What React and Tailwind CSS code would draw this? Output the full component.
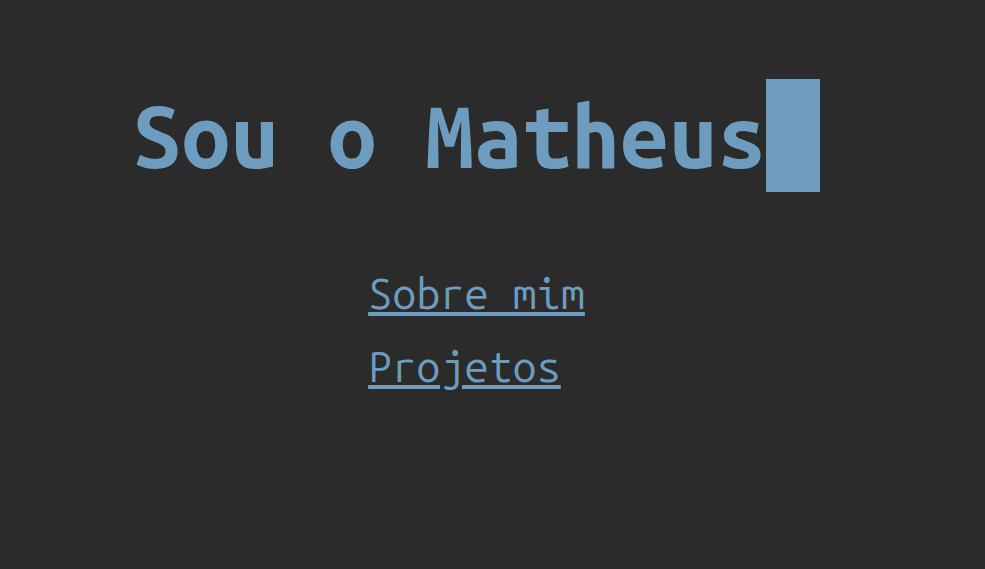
export default function App() {
  return (
    <main className="flex min-h-screen flex-col items-center bg-[#2b2b2b] pt-[79px] pr-8 font-['Ubuntu_Mono','DejaVu_Sans_Mono',monospace] text-[#6d9cbe]">
      <h1 className="flex items-center text-[87px] leading-[113px] font-extrabold">
        Sou o Matheus
        <span aria-hidden="true" className="h-[113px] w-[54px] bg-[#6d9cbe]" />
      </h1>
      <nav className="mt-[65px] flex flex-col items-start text-[43px] leading-[73px]">
        <a href="#sobre" className="underline decoration-4 underline-offset-3">Sobre mim</a>
        <a href="#projetos" className="underline decoration-4 underline-offset-3">Projetos</a>
      </nav>
    </main>
  );
}
